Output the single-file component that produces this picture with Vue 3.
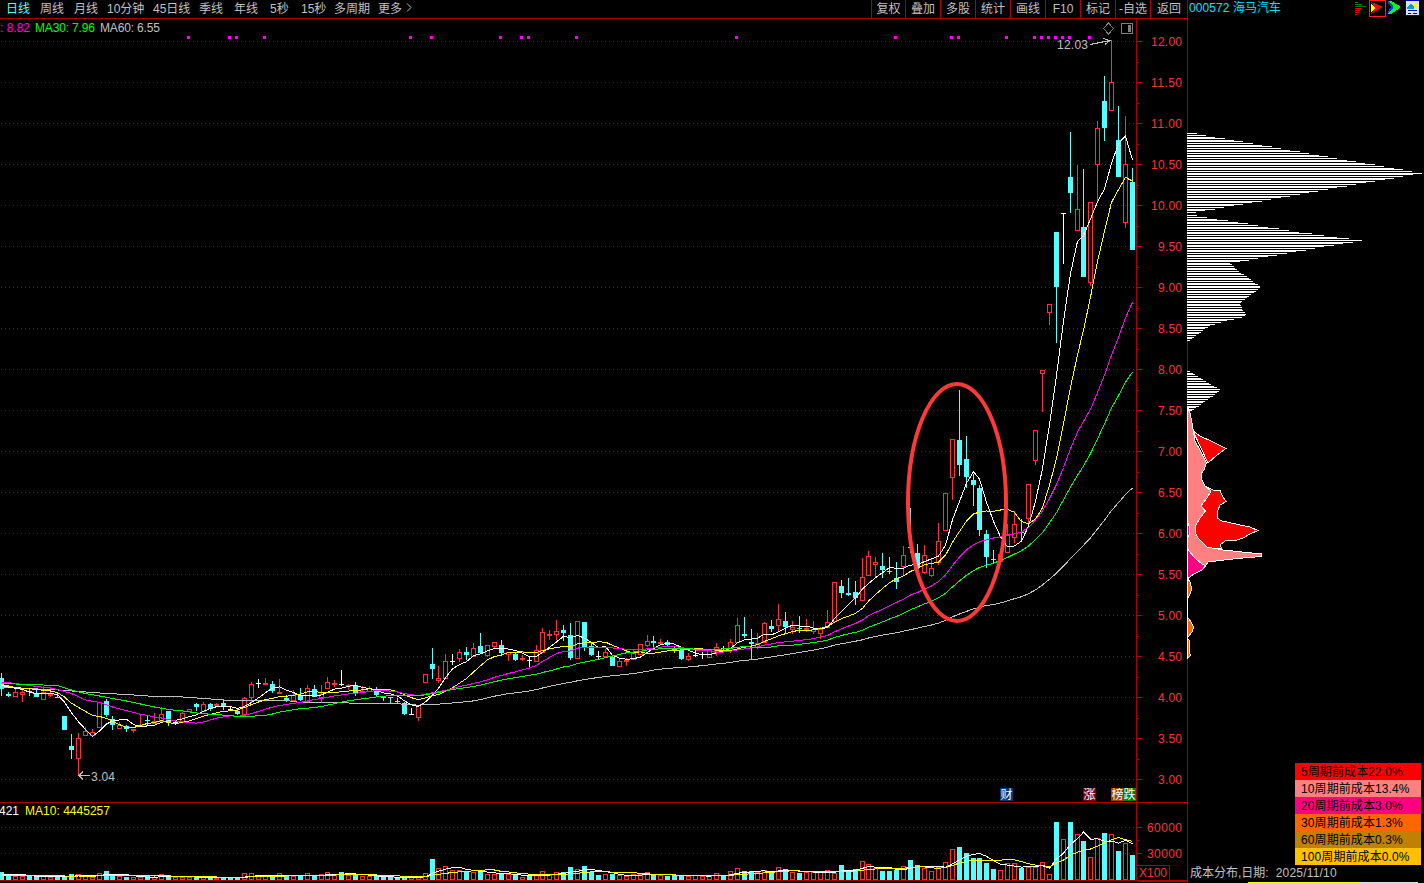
<template>
  <div class="terminal">
    <section class="main">
      <header class="toolbar">
        <nav class="periods">
          <span v-for="(p, i) in periods" :key="p" :class="{ active: i === 0 }">{{ p }}</span>
          <svg class="more" width="8" height="12" viewBox="0 0 8 12"><path d="M2 1.5 L6 5.5 L2 9.5" /></svg>
        </nav>
        <nav class="tools">
          <span v-for="t in tools" :key="t">{{ t }}</span>
        </nav>
      </header>

      <svg class="chart" width="1187" height="864" viewBox="0 19 1187 864">
        <!-- grid -->
        <g class="grid">
          <line v-for="g in grid" :key="g.y" x1="1" x2="1136" :y1="g.y + 0.5" :y2="g.y + 0.5" />
        </g>

        <!-- candles + volume -->
        <g v-for="c in candles" :key="c.x" :class="c.kind">
          <path class="wick" :d="c.wick" />
          <rect class="body" v-bind="c.body" />
        </g>
        <g v-for="c in candles" :key="'v' + c.x" :class="c.volKind">
          <rect class="body" v-bind="c.vol" />
        </g>

        <polyline v-for="l in lines" :key="l.id" class="ma" :class="l.id" :points="l.points" />

        <rect v-for="i in signals" :key="'s' + i" class="signal" :x="xAt(i) - 2" y="36" width="3" height="3" />

        <!-- axis -->
        <g class="axis">
          <path d="M1136.5 19V881M0 802.5H1187M0 880.5H1187M1137 865.5H1169.5V880M1137 881.5H1187" />
          <path :d="ticks" />
        </g>
        <g class="axis-text">
          <text v-for="g in grid" :key="'t' + g.y" x="1182" :y="g.y + 5" text-anchor="end"
                :textLength="g.width" lengthAdjust="spacing">{{ g.label }}</text>
          <text x="1139" y="877" textLength="28">X100</text>
        </g>

        <!-- high / low marks -->
        <g class="mark">
          <text x="1057" y="49" textLength="31">12.03</text>
          <path d="M1090 44.5L1110 40.5M1103 38.5L1110 40.5L1105 44.5" />
          <text x="91" y="781" textLength="24">3.04</text>
          <path d="M79 775.5H90M83 771.5L79 775.5L83 779.5" />
        </g>
        <g class="corner">
          <path d="M1108.5 23L1113.5 28.5L1108.5 34L1103.5 28.5Z" />
          <rect x="1121.5" y="23.5" width="11" height="10" rx="1" />
          <rect class="fill" x="1128" y="25" width="3" height="7" />
        </g>

        <g class="indicator">
          <text x="0" y="32" fill="#ff00ff" textLength="30">: 8.82</text>
          <text x="35" y="32" fill="#00ff00" textLength="60">MA30: 7.96</text>
          <text x="100" y="32" fill="#c0c0c0" textLength="60">MA60: 6.55</text>
          <text x="-1" y="815" fill="#fff" textLength="20">421</text>
          <text x="25" y="815" fill="#ffff00" textLength="85">MA10: 4445257</text>
        </g>

        <g v-for="b in badges" :key="b.text" class="badge">
          <rect :x="b.x" y="788" width="13" height="13" :fill="b.color" />
          <text :x="b.x + 0.5" y="799">{{ b.text }}</text>
        </g>

        <ellipse class="highlight" cx="957" cy="502.5" rx="49" ry="118.5" />
      </svg>
    </section>

    <aside class="panel">
      <header class="stock">
        <span class="code">000572</span>
        <span>海马汽车</span>
        <svg class="icons" width="68" height="18" viewBox="1354 0 68 18">
          <path class="i-green" d="M1355 2.5H1358M1355 4.5H1362M1355 6.5H1366" />
          <path class="i-red" d="M1355 8.5H1362M1355 10.5H1360M1355 12.5H1359M1355 14.5H1357" />
          <rect x="1369.5" y="0.5" width="16" height="16" fill="none" stroke="#ff2020" />
          <path d="M1371 2L1383 7L1371 14L1375 8Z" fill="#ff0000" />
          <path d="M1371 4L1375 8L1371 12Z" fill="#ffff00" />
          <path d="M1388 1H1391L1400 6V8L1391 14H1388L1393 7Z" fill="#00ff00" />
          <path d="M1388 1L1393 6V8L1388 14V12L1391 7L1388 3Z" fill="#0040ff" />
          <rect x="1405.5" y="0.5" width="14" height="15" fill="#d8e4ff" stroke="#0000a0" />
          <rect x="1414" y="3" width="4" height="5" fill="#ffff00" />
          <path d="M1407 7L1411 3L1414 7V9H1407Z" fill="#00a0d0" />
          <path d="M1408 10.5H1417M1408 13.5H1411M1413 13.5H1417" stroke="#0000a0" />
        </svg>
      </header>

      <svg class="chips" width="237" height="745" viewBox="1187 18 237 745">
        <rect v-for="b in chipBars" :key="b.y" x="1187" :y="b.y" :width="b.w" height="1" fill="#fff" />
        <path v-for="(a, i) in areas" :key="i" class="area" :d="a.d" :fill="a.color" />
        <path class="edge" d="M1187.5 408V659" />
      </svg>

      <ul class="legend">
        <li v-for="l in legend" :key="l.days" :class="'p' + l.days">{{ l.days }}周期前成本{{ l.value }}</li>
      </ul>
      <footer class="footer">
        <span>成本分布,日期:</span><span class="date">2025/11/10</span>
      </footer>
      <div class="strip"><i></i><b></b></div>
    </aside>
  </div>
</template>

<script setup>
const periods = ['日线', '周线', '月线', '10分钟', '45日线', '季线', '年线', '5秒', '15秒', '多周期', '更多']
const tools = ['复权', '叠加', '多股', '统计', '画线', 'F10', '标记', '-自选', '返回']

const legend = [
  { days: 5, value: '22.0%' },
  { days: 10, value: '13.4%' },
  { days: 20, value: '3.0%' },
  { days: 30, value: '1.3%' },
  { days: 60, value: '0.3%' },
  { days: 100, value: '0.0%' }
]

const badges = [
  { x: 1000, text: '财', color: '#003c78' },
  { x: 1083, text: '涨', color: '#800000' },
  { x: 1111, text: '榜', color: '#904800' },
  { x: 1123, text: '跌', color: '#008000' }
]

// price steps are 41px per 0.50
const grid = []
for (let k = 0; k <= 18; k++) {
  const label = (12 - k * 0.5).toFixed(2)
  grid.push({ y: 41 + k * 41, label, width: label.length > 4 ? 31 : 24 })
}
grid.push({ y: 827, label: '60000', width: 35 }, { y: 853, label: '30000', width: 35 })

const ticks = grid.map(g => `M1137 ${g.y + 0.5}H1142`).join('') +
  grid.slice(0, 18).map(g => `M1137 ${g.y + 21.5}H1139`).join('') + 'M1137 840.5H1139'

const xAt = i => Math.floor(1.985 + i * 6.9359)

// high, top, bottom, low, kind, volume top
// r = up, c = down, w / v = flat (with up / down volume)
const raw = `673 678 689 696 c 872|692 694 696 697 c 876|689 692 697 697 r 876|689 692 695 702 r 876|688 691 692 696 c 875
689 693 697 697 c 876|686 692 700 700 r 875|690 694 696 697 r 877|692 697 698 698 c 876|716 716 730 730 c 876
734 746 750 759 c 874|733 738 759 775 r 874|727 731 736 736 r 876|729 732 736 736 r 877|702 702 728 728 r 873
699 701 715 717 c 871|716 719 725 730 c 874|722 725 729 729 r 876|725 726 729 732 c 877|729 729 731 733 r 877
714 725 727 727 r 877|716 720 721 726 c 876|713 721 724 724 r 877|707 714 722 722 r 874|711 711 723 726 c 875
720 722 723 725 w 877|712 713 722 722 r 877|709 709 712 712 r 877|703 704 707 711 c 877|702 704 712 712 r 876
703 704 709 711 c 877|703 704 706 706 r 878|699 703 707 710 c 877|707 709 710 711 v 878|710 711 714 715 c 877
697 698 715 715 r 873|682 684 698 703 r 873|679 683 684 688 w 876|678 683 685 685 r 876|681 684 691 693 c 876
679 692 694 694 r 873|695 698 701 702 c 876|690 695 701 701 r 876|688 695 700 701 c 876|685 688 702 702 r 873
685 689 697 697 c 876|685 694 698 702 r 874|677 682 689 689 r 872|680 683 685 687 r 874|670 684 685 686 v 872
684 685 687 690 r 875|682 685 693 696 c 874|686 691 693 693 r 876|686 688 692 692 r 876|687 690 695 696 c 876
696 697 698 701 c 877|697 697 698 703 c 877|698 701 702 703 c 877|702 703 714 715 c 877|708 714 715 715 w 877
705 705 718 721 r 877|674 674 683 683 r 873|648 664 669 679 c 859|666 678 681 683 r 868|654 661 679 679 r 866
654 661 662 665 w 870|649 652 659 662 r 870|647 652 655 660 c 871|643 648 657 657 r 872|633 646 653 653 c 871
645 645 656 657 r 874|642 642 647 649 r 874|640 645 653 656 c 873|652 652 655 661 r 874|653 654 660 661 c 875
655 658 660 661 r 877|657 660 661 667 v 875|645 650 662 662 r 875|628 632 653 653 r 871|630 634 636 640 r 875
620 631 635 640 r 872|625 630 633 641 c 872|623 635 658 660 c 867|621 621 659 659 r 869|622 622 648 651 c 866
643 646 655 656 c 872|651 656 657 660 v 875|649 652 657 657 r 874|657 657 666 666 c 874|659 661 667 667 r 875
658 660 662 666 r 876|650 653 660 660 r 874|644 644 655 655 r 874|635 641 646 647 r 872|636 641 643 648 c 874
639 642 644 645 r 875|640 642 645 646 c 876|646 648 650 653 c 875|648 650 659 660 c 875|653 656 660 661 r 876
650 655 656 657 w 875|652 654 655 659 w 876|649 649 658 658 r 876|643 647 653 656 r 873|646 648 649 652 v 876
639 642 651 653 r 871|618 625 643 643 r 868|617 634 636 638 c 871|629 642 644 659 c 871|633 643 648 649 r 872
622 623 643 643 r 870|620 626 629 632 c 872|604 619 626 632 r 867|612 621 627 634 c 869|621 627 630 634 r 872
616 628 629 633 c 873|619 628 630 632 r 872|621 629 632 634 r 872|627 629 634 639 r 872|610 622 628 628 r 870
582 582 622 622 r 873|580 586 593 598 c 865|578 593 595 596 c 871|581 592 598 605 c 869|558 577 601 601 r 861
551 556 576 576 r 864|557 562 565 577 r 868|553 566 570 578 c 871|557 571 572 574 c 871|562 578 582 589 c 870
546 555 567 575 r 866|508 547 548 553 c 860|544 553 568 569 c 865|545 555 573 574 r 868|559 568 576 577 r 871
523 541 563 565 r 867|493 493 531 531 r 862|439 439 478 500 r 849|390 440 465 476 c 847|436 459 477 488 c 853
474 480 485 506 c 858|485 488 530 536 c 858|530 534 557 568 c 863|550 559 560 564 c 869|549 554 562 565 r 870
524 534 553 553 r 863|511 524 538 543 r 863|519 532 533 542 c 868|484 484 519 523 r 867|430 430 461 465 r 867
370 370 374 412 r 862|304 304 313 325 r 874|232 232 287 343 c 822|213 213 214 264 w 839|132 177 193 213 c 822
165 209 231 231 r 834|169 227 277 277 c 841|202 202 283 286 r 857|121 128 165 202 r 838|76 101 128 141 c 833
40 82 111 111 r 834|106 140 177 177 c 851|116 164 223 228 r 843|168 182 250 250 c 855`

const rows = raw.split(/[|\n]/).map(s => s.trim().split(' '))

const box = (x, top, bottom, hollow) => hollow
  ? { x: x - 1.5, y: top + 0.5, width: 4, height: Math.max(bottom - top - 1, 0.5) }
  : { x: x - 2, y: top, width: 5, height: bottom - top }

const kinds = { r: 'up', c: 'down', w: 'flat', v: 'flat' }

const candles = rows.map((row, i) => {
  const [high, top, bottom, low] = row.map(Number)
  const type = row[4]
  const x = xAt(i)
  const upVolume = type === 'r' || type === 'w'
  return {
    x,
    kind: kinds[type],
    volKind: upVolume ? 'up' : 'down',
    wick: `M${x + 0.5} ${high}V${top}M${x + 0.5} ${bottom}V${low}`,
    body: box(x, top, bottom, type === 'r'),
    vol: box(x, Number(row[5]), 880, upVolume),
    close: type === 'r' ? top + 0.5 : bottom - 0.5,
    volume: Number(row[5]) + 0.5
  }
})

function interpolate(points, at) {
  for (let k = 1; k < points.length; k++) {
    const [x0, y0] = points[k - 1]
    const [x1, y1] = points[k]
    if (at <= x1) return y0 + (y1 - y0) * (at - x0) / (x1 - x0)
  }
  return points[points.length - 1][1]
}

// the first n - 1 points need history from before the window, so they come from `seed`
function average(id, n, key, seed) {
  const points = candles.map((c, i) => {
    let y
    if (i < n - 1) {
      y = interpolate(seed, i)
    } else {
      y = candles.slice(i - n + 1, i + 1).reduce((sum, d) => sum + d[key], 0) / n
    }
    return `${c.x + 0.5},${y.toFixed(1)}`
  })
  return { id, points: points.join(' ') }
}

const lines = [
  average('ma60', 60, 'close', [[0, 687], [8, 690], [14, 693], [18, 694.5], [21, 696], [26, 697], [31, 699.5], [33, 700.5], [41, 700.5], [43, 702.5], [57, 703.5], [59, 705.5]]),
  average('ma5', 5, 'close', [[0, 685.5], [1, 687], [3, 689.5], [4, 692]]),
  average('ma10', 10, 'close', [[0, 684.5], [2, 687.5], [5, 689.5], [7, 691], [8, 692.5], [9, 697]]),
  average('ma20', 20, 'close', [[0, 682], [2, 683.5], [5, 686.5], [7, 688], [8, 689.5], [10, 693.5], [12, 700], [14, 702.5], [16, 707], [18, 710.5], [19, 713]]),
  average('ma30', 30, 'close', [[0, 683.5], [8, 685.5], [10, 690], [12, 693.5], [14, 696], [18, 701], [22, 707], [24, 709.5], [26, 711], [29, 714]]),
  average('ma5', 5, 'volume', [[0, 874.5], [4, 874.5]]),
  average('ma10', 10, 'volume', [[0, 875], [9, 875.5]])
]

const signals = [27, 33, 34, 38, 59, 62, 72, 75, 76, 83, 106, 129, 137, 138, 145, 149, 150, 151, 152, 153, 154, 157]

// outline of the chip distribution: y, width
const chipShape = [
  [133, 5], [173.2, 235], [212.5, 9], [213.5, 0], [214.5, 0], [215.8, 10], [232.2, 112], [240.4, 175], [263.4, 43],
  [268, 48], [273, 54], [277, 61], [282, 67], [287, 74], [292, 68], [297, 61], [302, 54], [305, 53],
  [312, 57], [315, 60], [318, 54], [320, 42], [322, 36], [325, 24], [330, 17], [335, 10], [338, 6],
  [341, 2], [342, 0], [370, 0], [371, 2], [376, 10], [382, 20], [387, 28], [390, 34], [394, 29],
  [400, 20], [405, 13], [411, 5], [412, 0]
]
const chipBars = []
for (let y = 133.8; y < 412; y += 1.64) {
  const w = Math.round(interpolate(chipShape, y))
  if (w > 0) chipBars.push({ y: Math.floor(y), w })
}

const areas = [
  { color: '#ff0000', d: 'M1193 431L1200 436L1213 442L1226 448.5L1217 455L1208 463Z' },
  { color: '#ff0000', d: 'M1205 486L1213 490L1220 490.5L1223 497L1226 501.5L1220 505L1218 510L1217 518L1222 521L1238 524.5L1250 527L1258 530.5L1250 534L1243 538L1237 540L1225 541L1220 545L1222 549L1195 548L1190 520Z' },
  { color: '#ff8080', d: 'M1187.5 407L1190 413L1192 423L1193.5 432L1195 441L1200 450L1203 456L1206.5 463L1204 470L1201 474L1202 480L1205 486L1211 491L1207 498L1201 506L1205.5 511L1200 518L1196 525L1195 532L1198 538L1207 547L1223 550L1261.5 554V556.5L1237 558.5L1208 562L1205 567L1187.5 570Z' },
  { color: '#ff0080', d: 'M1187.5 549L1194 557L1200 562.5L1205.5 566L1202 570L1194 574L1188.5 578L1187.5 579Z' },
  { color: '#ff0080', d: 'M1187.5 522L1189.5 527V534L1187.5 538Z' },
  { color: '#ff6600', d: 'M1187.5 578L1190.5 583L1191.5 589L1190 594L1187.5 599Z' },
  { color: '#ff6600', d: 'M1187.5 617L1190.5 621L1193.5 627L1192 632L1189 636L1187.5 638Z' },
  { color: '#ff6600', d: 'M1187.5 638L1189.5 641V652L1190.5 655.5L1188 658Z' }
]
</script>

<style>
body {
  background: #000;
  overflow: hidden;
}
</style>

<style scoped>
.terminal {
  display: flex;
  width: 1424px;
  height: 883px;
  background: #000;
  color: #c0c0c0;
  font: 12px/16px "Liberation Sans", "Noto Sans CJK SC", sans-serif;
  overflow: hidden;
}

.main {
  width: 1187px;
}

.toolbar {
  display: flex;
  justify-content: space-between;
  box-sizing: border-box;
  height: 19px;
  border-bottom: 1px solid #b00000;
  line-height: 18px;
  white-space: nowrap;
}

.periods {
  display: grid;
  grid-template-columns: 34px 34px 33px 46px 46px 35px 36px 31px 33px 44px 27px 10px;
  padding-left: 6px;
}

.periods .active {
  color: #54ffff;
}

.more {
  margin-top: 2px;
  fill: none;
  stroke: #c0c0c0;
}

.tools {
  display: grid;
  grid-template-columns: 34px repeat(7, 35px) 37px;
  text-align: center;
}

.tools span {
  border-left: 1px solid #b00000;
}

svg {
  display: block;
}

.chart,
.chips {
  shape-rendering: crispEdges;
}

.grid line {
  stroke: #a00000;
  stroke-dasharray: 1 3;
}

.up .wick,
.up .body {
  fill: none;
  stroke: #ff3232;
}

.down .wick {
  stroke: #54ffff;
}

.down .body {
  fill: #54ffff;
}

.flat .wick {
  stroke: #fff;
}

.flat .body {
  fill: #fff;
}

.ma {
  fill: none;
  stroke-width: 1;
}

.ma5 { stroke: #fff; }
.ma10 { stroke: #ffff00; }
.ma20 { stroke: #ff00ff; }
.ma30 { stroke: #00ff00; }
.ma60 { stroke: #c0c0c0; }

.signal {
  fill: #ff00ff;
}

.axis path {
  fill: none;
  stroke: #b00000;
}

.axis-text {
  fill: #ff3232;
}

.mark text {
  fill: #c0c0c0;
}

.mark path {
  fill: none;
  stroke: #c0c0c0;
}

.corner {
  fill: none;
  stroke: #808080;
}

.corner .fill {
  fill: #808080;
  stroke: none;
}

.badge text {
  fill: #fff;
}

.highlight {
  fill: none;
  stroke: #ff3838;
  stroke-width: 4;
  shape-rendering: auto;
}

.panel {
  display: flex;
  flex-direction: column;
  box-sizing: border-box;
  width: 237px;
  border-left: 1px solid #a00000;
}

.stock {
  display: flex;
  height: 18px;
  padding-left: 1px;
  line-height: 16px;
  color: #00e4ff;
}

.code {
  width: 44px;
  letter-spacing: 0.1px;
}

.icons {
  margin-left: auto;
  margin-right: 2px;
  shape-rendering: crispEdges;
}

.i-green { stroke: #008000; }
.i-red { stroke: #ff0000; }

.chips {
  margin-left: -1px;
}

.area {
  stroke: #fff;
}

.edge {
  stroke: #fff;
}

.legend {
  width: 126px;
  margin: 0 0 0 107px;
  padding: 0;
  list-style: none;
  color: #000;
}

.legend li {
  height: 17px;
  padding-left: 6px;
  line-height: 18px;
  letter-spacing: 0.1px;
}

.p5 { background: #ff0000; }
.p10 { background: #ff8080; }
.p20 { background: #ff0080; }
.p30 { background: #ff6600; }
.p60 { background: #c08000; }
.p100 { background: #ffc000; }

.footer {
  display: flex;
  height: 17px;
  padding-left: 2px;
}

.date {
  margin-left: 7px;
  letter-spacing: 0.2px;
}

.strip {
  display: flex;
  height: 1px;
  padding-left: 60px;
}

.strip i {
  width: 112px;
  background: #ffff00;
}

.strip b {
  width: 58px;
  background: #e0e0e0;
}
</style>
